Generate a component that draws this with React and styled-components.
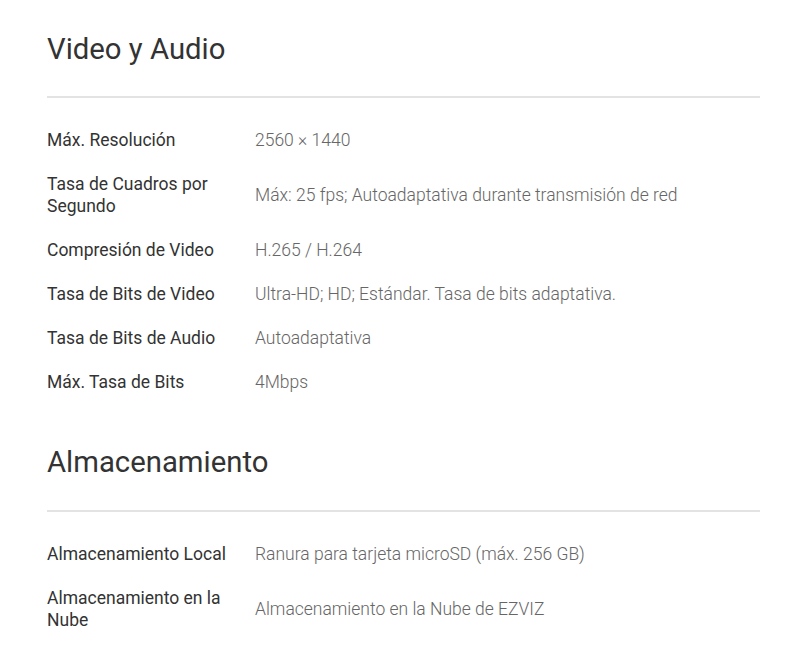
import React from "react";
import styled, { createGlobalStyle } from "styled-components";

const Global = createGlobalStyle`
  html, body { margin: 0; padding: 0; background: #fff; }
  body { font-family: Roboto, "Noto Sans", Arial, sans-serif; }
`;

const Page = styled.div`
  padding: 0 40px 0 47px;
  width: 713px;
`;

const Section = styled.section`
  display: flex;
  flex-direction: column;
`;

const Heading = styled.h2`
  margin: 0;
  padding: ${(p) => (p.$first ? "29px" : "38px")} 0 ${(p) => (p.$first ? "27px" : "28px")};
  font-size: 29.3px;
  line-height: 40px;
  font-weight: 400;
  color: #333;
  border-bottom: 2px solid #e3e3e3;
`;

const List = styled.dl`
  margin: 0;
  padding: 20px 0 0;
  display: flex;
  flex-direction: column;
`;

const Row = styled.div`
  display: grid;
  grid-template-columns: 198px 1fr;
  column-gap: 10px;
  align-items: center;
  padding: 11px 0;
`;

const Label = styled.dt`
  margin: 0;
  font-size: 17.5px;
  line-height: 22px;
  color: #333;
  font-weight: 400;
`;

const Value = styled.dd`
  margin: 0;
  font-size: 17.5px;
  line-height: 22px;
  color: #666;
  font-weight: 300;
`;

const sections = [
  {
    title: "Video y Audio",
    rows: [
      ["Máx. Resolución", "2560 × 1440"],
      ["Tasa de Cuadros por Segundo", "Máx: 25 fps; Autoadaptativa durante transmisión de red"],
      ["Compresión de Video", "H.265 / H.264"],
      ["Tasa de Bits de Video", "Ultra-HD; HD; Estándar. Tasa de bits adaptativa."],
      ["Tasa de Bits de Audio", "Autoadaptativa"],
      ["Máx. Tasa de Bits", "4Mbps"],
    ],
  },
  {
    title: "Almacenamiento",
    rows: [
      ["Almacenamiento Local", "Ranura para tarjeta microSD (máx. 256 GB)"],
      ["Almacenamiento en la Nube", "Almacenamiento en la Nube de EZVIZ"],
    ],
  },
];

export default function App() {
  return (
    <>
      <Global />
      <Page>
        {sections.map((s, i) => (
          <Section key={s.title}>
            <Heading $first={i === 0}>{s.title}</Heading>
            <List>
              {s.rows.map(([k, v]) => (
                <Row key={k}>
                  <Label>{k}</Label>
                  <Value>{v}</Value>
                </Row>
              ))}
            </List>
          </Section>
        ))}
      </Page>
    </>
  );
}
